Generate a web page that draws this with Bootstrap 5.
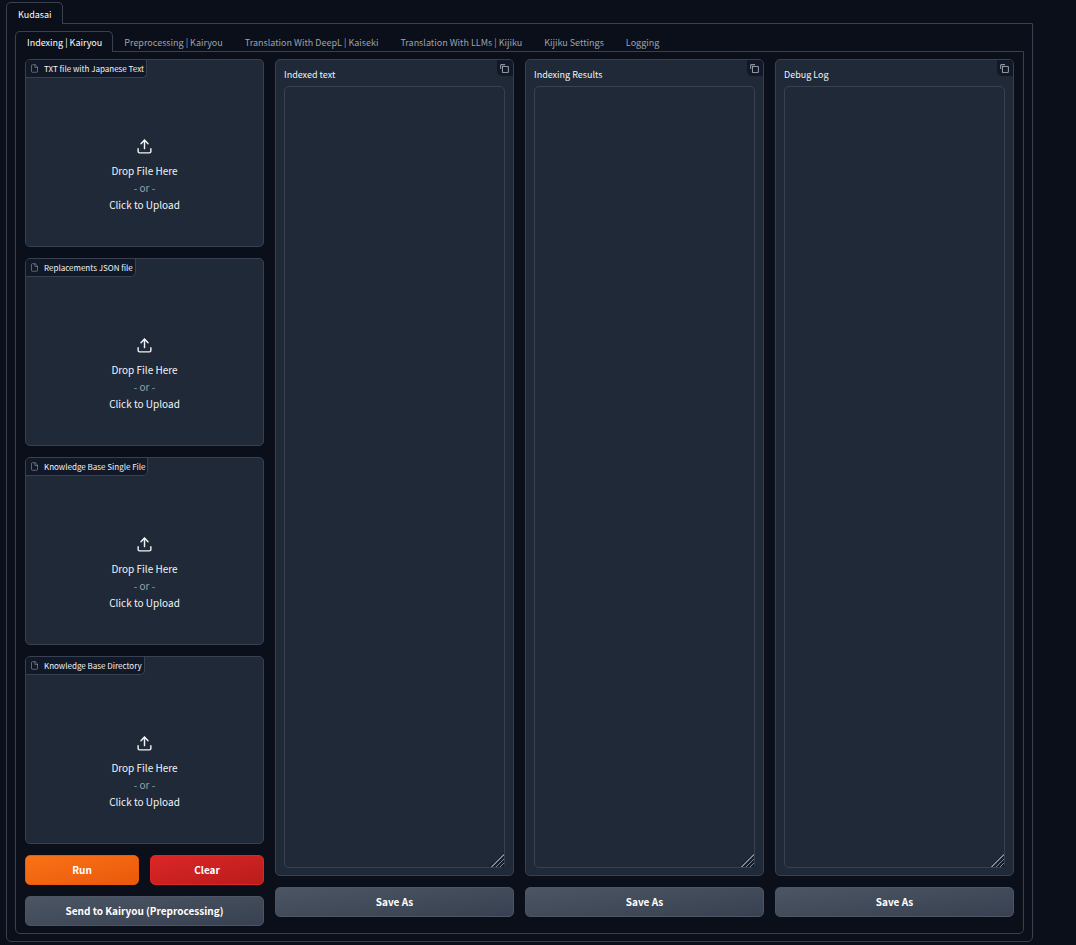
<!DOCTYPE html>
<html lang="en" data-bs-theme="dark">
<head>
<meta charset="utf-8">
<meta name="viewport" content="width=device-width, initial-scale=1">
<title>Kudasai</title>
<link href="https://cdn.jsdelivr.net/npm/bootstrap@5.3.0/dist/css/bootstrap.min.css" rel="stylesheet">
<style>
  :root { --line: #374151; --page: #0b0f19; --block: #1f2937; --label: #111827; }
  body { background: var(--page); color: #f3f4f6; font-family: "Noto Sans CJK JP", "Open Sans", sans-serif; font-size: 10px; line-height: 16px; }
  .app-shell { padding: 2px 43px 3px 6px; }
  .nav-tabs { --bs-nav-tabs-border-color: var(--line); border-bottom: 0; flex-wrap: nowrap; }
  .nav-tabs .nav-link { position: relative; height: 22px; padding: 2px 10px 0; border: 1px solid transparent; border-bottom: 0; border-radius: 5px 5px 0 0; margin: 0 0 -1px; color: #9ca3af; font-size: 9px; line-height: 16px; white-space: nowrap; }
  .nav-tabs .nav-link.active { padding-left: 11px; background: var(--page); border-color: var(--line); color: #fff; }
  .tab-frame { border: 1px solid var(--line); border-radius: 0 0 5px 5px; }
  .outer-frame { padding: 7px 8px; }
  .outer-frame .nav-link { height: 21px; padding-top: 1px; }
  .inner-frame { padding: 7px 9px; }
  .columns { gap: 11px; }
  .stack { gap: 11px; flex: 1 1 0; min-width: 0; }
  .block { position: relative; background: var(--block); border: 1px solid var(--line); border-radius: 5px; }
  .file-block { height: 188px; overflow: hidden; }
  .file-label { position: absolute; top: 0; left: 0; height: 18px; padding: 0 2px 0 4px; gap: 5px; background: var(--label); border: solid var(--line); border-width: 0 1px 1px 0; border-radius: 0 0 5px 0; font-size: 8px; line-height: 17px; color: #f3f4f6; white-space: nowrap; }
  .file-label svg { color: #9ca3af; }
  .drop-zone { padding: 45px 0 0; background: none; border: 0; color: #f3f4f6; font-size: 10px; line-height: 17px; }
  .drop-zone svg { margin-bottom: 7px; }
  .drop-zone .muted { color: #9ca3af; }
  .text-block { padding: 7px 8px; }
  .text-block label { font-size: 9px; line-height: 16px; margin-bottom: 3px; color: #f3f4f6; }
  .text-block textarea { height: 782px; min-height: 0; padding: 6px; border: 1px solid var(--line); border-radius: 5px; background: var(--block); font-size: 10px; resize: both; }
  .text-block textarea::-webkit-resizer { background: linear-gradient(135deg, #1f2937 50%, transparent 50%), repeating-linear-gradient(135deg, #808690 0 1px, #161e2b 1px 3px); }
  .copy-btn { position: absolute; top: 0; right: 0; width: 16px; height: 16px; padding: 0 1px 0 0; border: 0; border-radius: 0 4px 0 5px; background: var(--label); color: #b6bbc4; }
  .action { height: 30px; padding: 0; border-radius: 5px; font-size: 10px; font-weight: 700; line-height: 28px; color: #fff; border: 1px solid #4b5563; background: linear-gradient(to bottom right, #4b5563, #374151); }
  .action.run { border-color: #ea580c; background: linear-gradient(to bottom right, #f97316, #ea580c); }
  .action.clear { border-color: #dc2626; background: linear-gradient(to bottom right, #dc2626, #b91c1c); }
  .action:hover { color: #fff; }
</style>
</head>
<body>
<svg class="d-none" aria-hidden="true">
  <symbol id="i-file" viewBox="0 0 24 24" fill="none" stroke="currentColor" stroke-width="1.5" stroke-linecap="round" stroke-linejoin="round"><path d="M13 2H6a2 2 0 0 0-2 2v16a2 2 0 0 0 2 2h12a2 2 0 0 0 2-2V9z"/><path d="M13 2v7h7"/></symbol>
  <symbol id="i-upload" viewBox="0 0 24 24" fill="none" stroke="currentColor" stroke-width="2" stroke-linecap="round" stroke-linejoin="round"><path d="M21 15v4a2 2 0 0 1-2 2H5a2 2 0 0 1-2-2v-4"/><path d="M17 8l-5-5-5 5"/><path d="M12 3v12"/></symbol>
  <symbol id="i-copy" viewBox="0 0 32 32"><path fill="currentColor" d="M28 10v18H10V10h18m0-3H10a3 3 0 0 0-3 3v18a3 3 0 0 0 3 3h18a3 3 0 0 0 3-3V10a3 3 0 0 0-3-3Z"/><path fill="currentColor" d="M4 18H1V4a3 3 0 0 1 3-3h14v3H4Z"/></symbol>
</svg>
<main class="app-shell">
  <ul class="nav nav-tabs" role="tablist">
    <li class="nav-item"><button type="button" class="nav-link active" role="tab" aria-selected="true">Kudasai</button></li>
  </ul>
  <section class="tab-frame outer-frame">
    <ul class="nav nav-tabs" role="tablist">
      <li class="nav-item"><button type="button" class="nav-link active" role="tab" aria-selected="true">Indexing | Kairyou</button></li>
      <li class="nav-item"><button type="button" class="nav-link" role="tab">Preprocessing | Kairyou</button></li>
      <li class="nav-item"><button type="button" class="nav-link" role="tab">Translation With DeepL | Kaiseki</button></li>
      <li class="nav-item"><button type="button" class="nav-link" role="tab">Translation With LLMs | Kijiku</button></li>
      <li class="nav-item"><button type="button" class="nav-link" role="tab">Kijiku Settings</button></li>
      <li class="nav-item"><button type="button" class="nav-link" role="tab">Logging</button></li>
    </ul>
    <div class="tab-frame inner-frame">
      <div class="columns d-flex align-items-start">
        <div class="stack d-flex flex-column">
          <div class="block file-block">
            <div class="file-label d-flex align-items-center"><svg width="9" height="9"><use href="#i-file"/></svg><span>TXT file with Japanese Text</span></div>
            <button type="button" class="drop-zone d-flex flex-column align-items-center justify-content-center w-100 h-100"><svg width="17" height="17"><use href="#i-upload"/></svg><span>Drop File Here</span><span class="muted">- or -</span><span>Click to Upload</span></button>
          </div>
          <div class="block file-block">
            <div class="file-label d-flex align-items-center"><svg width="9" height="9"><use href="#i-file"/></svg><span>Replacements JSON file</span></div>
            <button type="button" class="drop-zone d-flex flex-column align-items-center justify-content-center w-100 h-100"><svg width="17" height="17"><use href="#i-upload"/></svg><span>Drop File Here</span><span class="muted">- or -</span><span>Click to Upload</span></button>
          </div>
          <div class="block file-block">
            <div class="file-label d-flex align-items-center"><svg width="9" height="9"><use href="#i-file"/></svg><span>Knowledge Base Single File</span></div>
            <button type="button" class="drop-zone d-flex flex-column align-items-center justify-content-center w-100 h-100"><svg width="17" height="17"><use href="#i-upload"/></svg><span>Drop File Here</span><span class="muted">- or -</span><span>Click to Upload</span></button>
          </div>
          <div class="block file-block">
            <div class="file-label d-flex align-items-center"><svg width="9" height="9"><use href="#i-file"/></svg><span>Knowledge Base Directory</span></div>
            <button type="button" class="drop-zone d-flex flex-column align-items-center justify-content-center w-100 h-100"><svg width="17" height="17"><use href="#i-upload"/></svg><span>Drop File Here</span><span class="muted">- or -</span><span>Click to Upload</span></button>
          </div>
          <div class="columns d-flex">
            <button type="button" class="btn action run flex-fill w-50">Run</button>
            <button type="button" class="btn action clear flex-fill w-50">Clear</button>
          </div>
          <button type="button" class="btn action w-100">Send to Kairyou (Preprocessing)</button>
        </div>
        <div class="stack d-flex flex-column">
          <div class="block text-block">
            <label for="indexed" class="d-block">Indexed text</label>
            <textarea id="indexed" class="form-control d-block"></textarea>
            <button type="button" class="copy-btn d-flex align-items-center justify-content-center" aria-label="Copy indexed text"><svg width="9" height="9"><use href="#i-copy"/></svg></button>
          </div>
          <button type="button" class="btn action w-100">Save As</button>
        </div>
        <div class="stack d-flex flex-column">
          <div class="block text-block">
            <label for="results" class="d-block">Indexing Results</label>
            <textarea id="results" class="form-control d-block"></textarea>
            <button type="button" class="copy-btn d-flex align-items-center justify-content-center" aria-label="Copy indexing results"><svg width="9" height="9"><use href="#i-copy"/></svg></button>
          </div>
          <button type="button" class="btn action w-100">Save As</button>
        </div>
        <div class="stack d-flex flex-column">
          <div class="block text-block">
            <label for="debug" class="d-block">Debug Log</label>
            <textarea id="debug" class="form-control d-block"></textarea>
            <button type="button" class="copy-btn d-flex align-items-center justify-content-center" aria-label="Copy debug log"><svg width="9" height="9"><use href="#i-copy"/></svg></button>
          </div>
          <button type="button" class="btn action w-100">Save As</button>
        </div>
      </div>
    </div>
  </section>
</main>
<script src="https://cdn.jsdelivr.net/npm/bootstrap@5.3.0/dist/js/bootstrap.bundle.min.js"></script>
</body>
</html>
